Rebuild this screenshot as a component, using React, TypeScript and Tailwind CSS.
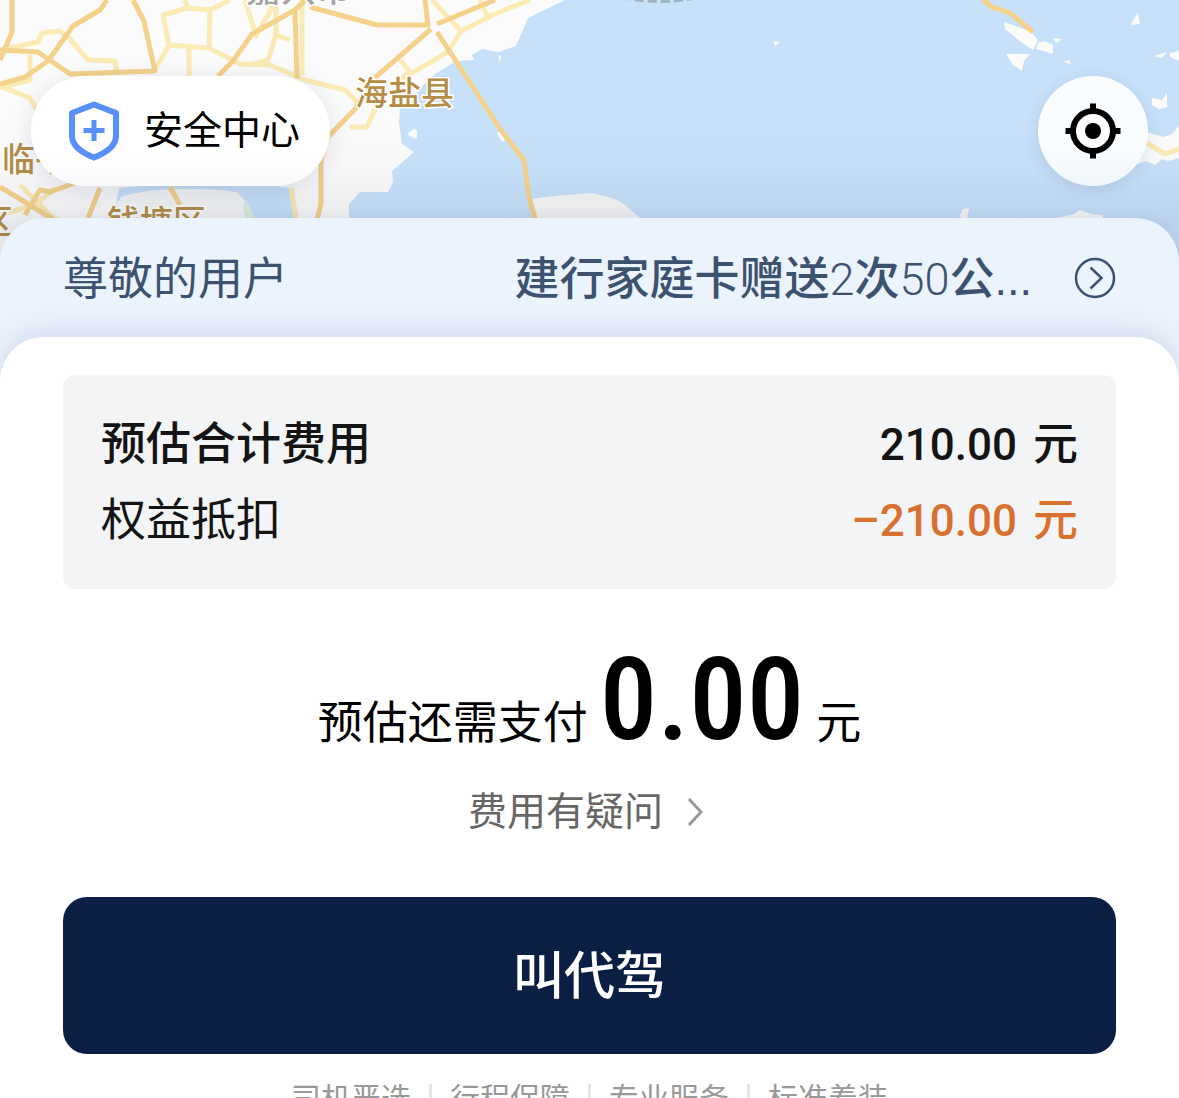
import React from 'react';

const CJK = "font-['Noto_Sans_CJK_SC',sans-serif]";

function MapBackdrop() {
  return (
    <svg
      className="absolute inset-x-0 top-0 h-[400px] w-full"
      viewBox="0 0 1179 400"
      preserveAspectRatio="xMidYMin slice"
      aria-hidden="true"
    >
      <defs>
        <linearGradient id="mapShade" x1="0" y1="0" x2="0" y2="1">
          <stop offset="0" stopColor="#3c4664" stopOpacity="0" />
          <stop offset="0.5" stopColor="#3c4664" stopOpacity="0.02" />
          <stop offset="1" stopColor="#3c4664" stopOpacity="0.09" />
        </linearGradient>
      </defs>
      <rect width="1179" height="400" fill="#c7e1fa" />
      {/* mainland */}
      <path
        fill="#fbfbfb"
        d="M0 0H565L528 18L516 46L498 52L482 49L472 55L474 60L456 61L435 74L400 108L399 122L402 144L414 152L392 171L393 182L388 192H360L349 204V230H296L291 188Q220 178 119 188L112 230L100 400H0Z"
      />
      <path fill="#f6f7f6" d="M112 210L122 196Q170 184 237 192L248 204L259 230H112Z" />
      <path fill="#dcefdc" d="M246 200L259 230H248L243 206Z" />
      <path fill="#f6f7f6" d="M530 199Q560 195 590 193Q618 198 625 205L645 222H532Z" />
      {/* islets */}
      <g fill="#fbfbfa">
        <path d="M408 133L414 129L417 130V139L409 136ZM498 55L501 56L500 63ZM497 133L504 130L509 138L502 142ZM773 41L780 42L775 46Z" />
        <path d="M1004 22L1030 31L1038 40L1033 50L1021 42L1005 29ZM1038 43L1044 41L1053 45V54L1036 49ZM1053 38L1062 39L1056 43ZM1006 54H1030L1024 61L1022 71L1013 65ZM1063 62L1069 60L1071 64ZM1133 20L1138 13L1140 24L1131 25ZM1154 56L1167 52L1162 58ZM1170 53L1179 51V61L1170 57ZM1152 98L1162 100L1167 93V107L1159 109L1152 105Z" />
        <path d="M1130 134L1140 130L1150 133L1163 137L1172 134L1179 126V158L1168 161L1162 159L1155 165L1146 161L1130 167Z" />
        <path d="M959 217L963 209L969 208L967 219ZM1056 218L1074 214L1080 210L1091 214L1103 215V220H1056Z" />
      </g>
      {/* secondary roads */}
      <g fill="none" stroke="#faeab4" strokeWidth="5" strokeLinejoin="round">
        <path d="M0 50L38 42L42 33L60 31L70 39L88 60L115 61L117 74" />
        <path d="M30 55V80L0 88M0 86L30 98L42 120" />
        <path d="M185 0L188 8L163 15L169 45L156 68M169 45L209 48L240 64L270 65L305 80L345 90L360 105" />
        <path d="M189 48V76M188 8L210 10L209 48M210 10L230 0M245 0L256 36L276 0V35L290 40M276 35L268 60L250 65" />
        <path d="M432 0L445 14L461 31L495 14L530 0M461 31L448 52L400 80L410 72L400 60M480 0L488 18M350 127H367L377 105M302 0V75" />
        <path d="M291 188L298 230M0 215L35 205L55 188M10 240L60 218M20 185L60 225" />
        <path d="M1147 143L1165 154L1179 149" />
      </g>
      {/* trunk roads */}
      <g fill="none" stroke="#f4d28b" strokeWidth="5" strokeLinejoin="round">
        <path d="M12 0V32L0 60M0 50L38 52L70 74L155 71L144 21L133 0" />
        <path d="M0 84L25 77L48 61L73 26L100 10L107 0" />
        <path d="M218 76L233 61L252 34L295 10L305 0M295 10L297 78M310 7L377 25H428L425 0M437 24L495 0M431 29L370 82L356 108L328 137L321 160V204L313 235" />
        <path d="M437 32L500 129L524 160L529 197L536 222" />
        <path d="M0 187L30 205L62 225M75 183L50 192L40 190L25 215M100 188L88 218M170 187L180 205" />
        <path d="M980 -3L992 7L999 9L1010 13L1033 32" />
      </g>
      <g className="font-['Noto_Sans_CJK_SC',sans-serif] font-medium" fontSize="33" stroke="#fff" strokeWidth="3" paintOrder="stroke">
        <g fill="#b58d45">
          <text x="355" y="105">海盐县</text>
          <text x="2" y="171">临平区</text>
          <text x="107" y="234">钱塘区</text>
          <text x="-20" y="234">区</text>
        </g>
        <g fill="#a5a5a5" fontSize="35">
          <text x="246" y="2">嘉兴市</text>
        </g>
      </g>
      <path d="M622 -4Q660 4 698 -4" fill="none" stroke="#9fb2c4" strokeWidth="6" strokeDasharray="9 4" />
      <rect y="120" width="1179" height="100" fill="url(#mapShade)" />
      <rect y="220" width="1179" height="180" fill="#3c4664" fillOpacity="0.09" />
    </svg>
  );
}

function ShieldIcon() {
  return (
    <svg className="h-[60px] w-[52px] shrink-0" viewBox="0 0 52 60" fill="none" stroke="#5890fb" aria-hidden="true">
      <path strokeWidth="6" strokeLinejoin="round" d="M26 3.500L48 12V35C48 44 40 51 26 56.500C12 51 4 44 4 35V12Z" />
      <path strokeWidth="5" d="M26 19V40M15.500 29.500H36.500" />
    </svg>
  );
}

function LocateIcon() {
  return (
    <svg className="size-14" viewBox="0 0 56 56" aria-hidden="true">
      <circle cx="28" cy="28" r="20" fill="#fff" stroke="#000" strokeWidth="6" />
      <circle cx="28" cy="28" r="8" />
      <path stroke="#000" strokeWidth="6" d="M28 .5V9M28 47V55.500M.5 28H9M47 28H55.500" />
    </svg>
  );
}

const promises = ['司机严选', '行程保障', '专业服务', '标准着装'];

export default function App() {
  return (
    <div className={`relative h-dvh overflow-hidden bg-white text-black ${CJK}`}>
      <MapBackdrop />

      <div className="relative flex items-center justify-between px-[31px] pt-[76px] pb-8">
        <button className="flex h-[110px] items-center rounded-full bg-linear-to-b from-white from-70% to-[#fafafa] pr-[30px] pl-[37px] text-[39px] leading-[48px] shadow-[0_4px_24px_rgba(40,50,90,0.13)]">
          <ShieldIcon />
          <span className="ml-6 pb-2">安全中心</span>
        </button>
        <button
          aria-label="定位"
          className="flex size-[110px] items-center justify-center rounded-full bg-linear-to-b from-[#fafdff] from-60% to-[#f1f6fa] shadow-[0_4px_16px_rgba(40,60,90,0.12)]"
        >
          <LocateIcon />
        </button>
      </div>

      <div className="relative rounded-t-[44px] bg-[#ebf3fd] shadow-[0_-2px_12px_rgba(60,70,100,0.06)]">
        <a
          href="#benefit"
          className="flex h-[119px] items-center px-[63px] text-[45px] leading-[60px] text-[#3d526f]"
        >
          <span className="shrink-0 pb-1">尊敬的用户</span>
          <span className="ml-auto font-medium">
            建行家庭卡赠送<span className="font-['Roboto',sans-serif] font-light">2</span>次
            <span className="font-['Roboto',sans-serif] font-light">50</span>公
            <span className="font-['Liberation_Sans',sans-serif] font-normal">...</span>
          </span>
          <svg className="ml-[42px] size-[42px] shrink-0" viewBox="0 0 42 42" fill="none" stroke="#3d526f" strokeWidth="2.500" aria-hidden="true">
            <circle cx="21" cy="21" r="19" />
            <path d="M16.500 10.500L27.500 21L16.500 31.500" />
          </svg>
        </a>

        <main className="rounded-t-[44px] bg-white px-[63px] pt-[38px] shadow-[0_-4px_32px_rgba(60,70,120,0.14)]">
          <dl className="rounded-xl bg-[#f3f4f6] px-[38px] pt-7 pb-[34px] text-[45px] leading-[76px] text-[#141414]">
            <div className="flex h-[76px] items-baseline justify-between">
              <dt className="font-medium">预估合计费用</dt>
              <dd className="flex items-baseline gap-4 font-medium">
                <span className="font-['Roboto',sans-serif] text-[44px]">210.00</span>
                <span>元</span>
              </dd>
            </div>
            <div className="flex h-[76px] items-baseline justify-between">
              <dt>权益抵扣</dt>
              <dd className="flex items-baseline gap-4 font-medium text-[#d8702f]">
                <span className="font-['Roboto',sans-serif] text-[44px]">–210.00</span>
                <span>元</span>
              </dd>
            </div>
          </dl>

          <p className="mt-[51px] flex items-baseline justify-center text-[45px] leading-[120px]">
            <span>预估还需支付</span>
            <strong className="mx-3 font-['Roboto_Condensed','Roboto',sans-serif] text-[115px] font-medium">
              0.00
            </strong>
            <span>元</span>
          </p>

          <a
            href="#fee"
            className="mx-auto flex w-fit items-center gap-6 pr-2 text-[39px] leading-[56px] text-[#666]"
          >
            <span className="pb-2">费用有疑问</span>
            <svg className="h-7 w-4" viewBox="0 0 16 28" fill="none" stroke="#999" strokeWidth="3" aria-hidden="true">
              <path d="M2 1L14 14L2 27" />
            </svg>
          </a>

          <button className="mt-[53px] flex h-[157px] w-full items-center justify-center rounded-3xl bg-[#0b1f44] pb-2 text-[51px] leading-[60px] font-medium text-white">
            叫代驾
          </button>

          <ul className="mt-[27px] flex items-center justify-center text-[30px] leading-[30px] text-[#999]">
            {promises.map((text, i) => (
              <li key={text} className="flex items-center">
                {i > 0 && <span className="mx-[18px] h-6 w-[3px] bg-[#e5e5e5]" />}
                {text}
              </li>
            ))}
          </ul>
        </main>
      </div>
    </div>
  );
}
